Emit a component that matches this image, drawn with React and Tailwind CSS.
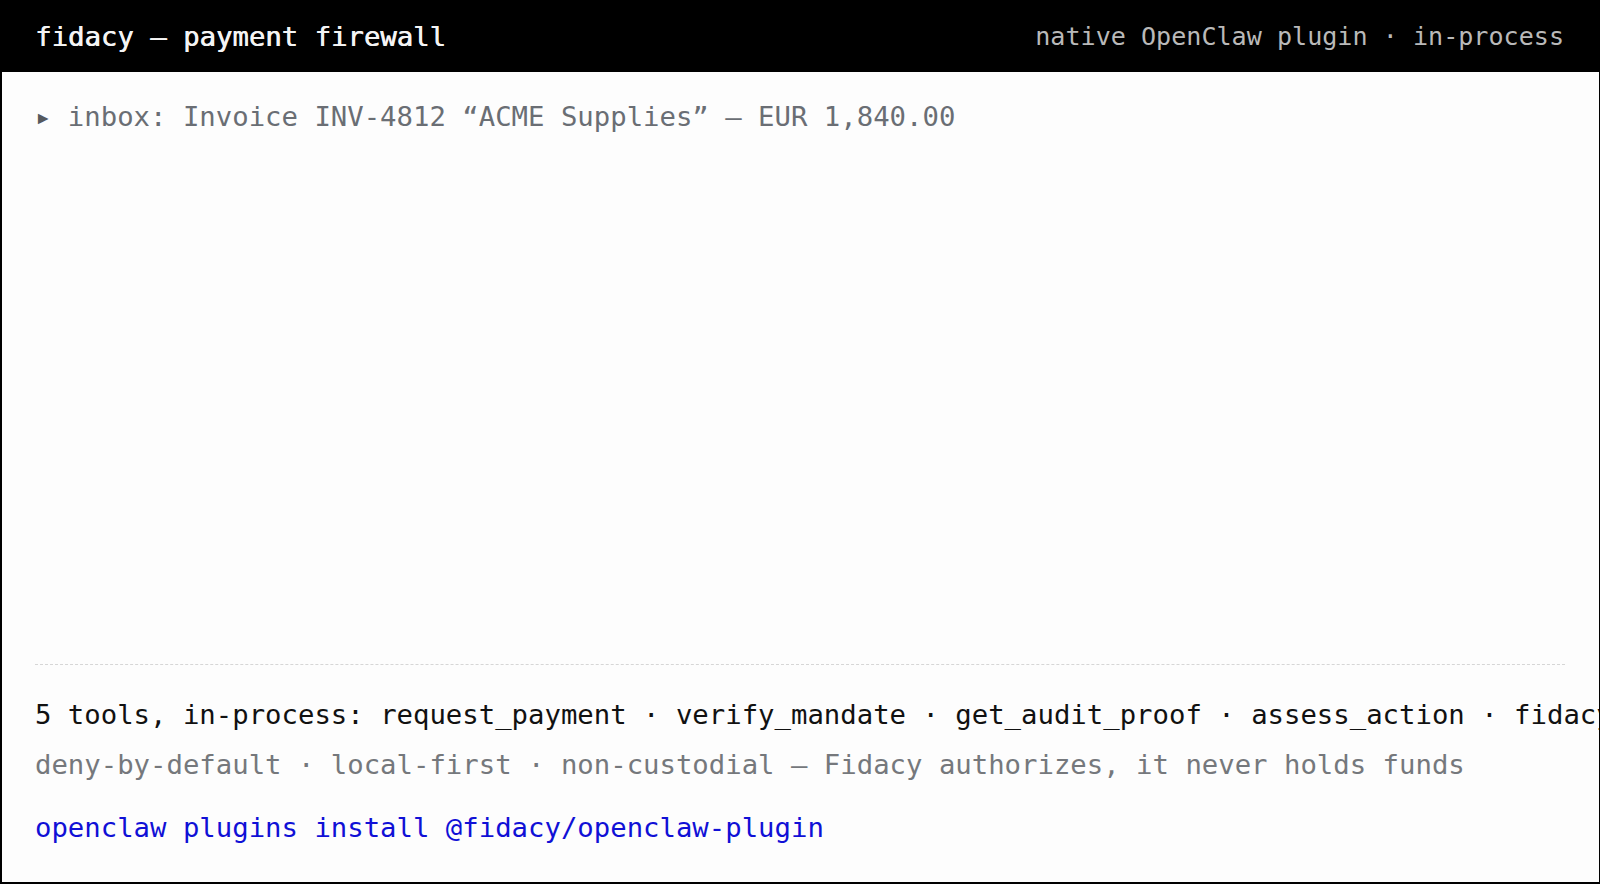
export default function App() {
  const tools = ["request_payment", "verify_mandate", "get_audit_proof", "assess_action", "fidacy_status"];

  return (
    <div
      className="w-[1600px] h-[884px] bg-black flex flex-col overflow-hidden"
      style={{ fontFamily: '"DejaVu Sans Mono", "Liberation Mono", monospace' }}
    >
      {/* top bar */}
      <div className="h-[72px] shrink-0 flex items-center justify-between pl-[35px] pr-[36px] pt-[2px]">
        <div className="text-[27.3px] text-[#f4f4f4] whitespace-nowrap [text-shadow:0.6px_0_0_#f4f4f4]">
          fidacy — payment firewall
        </div>
        <div className="text-[25.1px] text-[#b9b9b9] whitespace-nowrap">native OpenClaw plugin · in-process</div>
      </div>

      {/* terminal body */}
      <div className="flex-1 ml-[2px] mr-[1px] mb-[2px] bg-[#fdfdfd] flex flex-col overflow-hidden px-[33px] text-[27.3px] leading-[40px]">
        <div className="pt-[25px] whitespace-nowrap text-[#6a6e74]">
          <span className="text-[#55595e]">▸</span> inbox: Invoice INV-4812 “ACME Supplies” — EUR 1,840.00
        </div>

        <div className="flex-1" />

        <div className="border-t border-dashed border-[#d6d6d6] mr-[1px]" />

        <div className="mt-[30px] whitespace-nowrap text-[#111111]">
          5 tools, in-process: {tools.join(" · ")}
        </div>
        <div className="mt-[10px] whitespace-nowrap text-[#75787c]">
          deny-by-default · local-first · non-custodial — Fidacy authorizes, it never holds funds
        </div>
        <div className="mt-[23px] mb-[34px] whitespace-nowrap text-[#1010d6]">
          openclaw plugins install @fidacy/openclaw-plugin
        </div>
      </div>
    </div>
  );
}
